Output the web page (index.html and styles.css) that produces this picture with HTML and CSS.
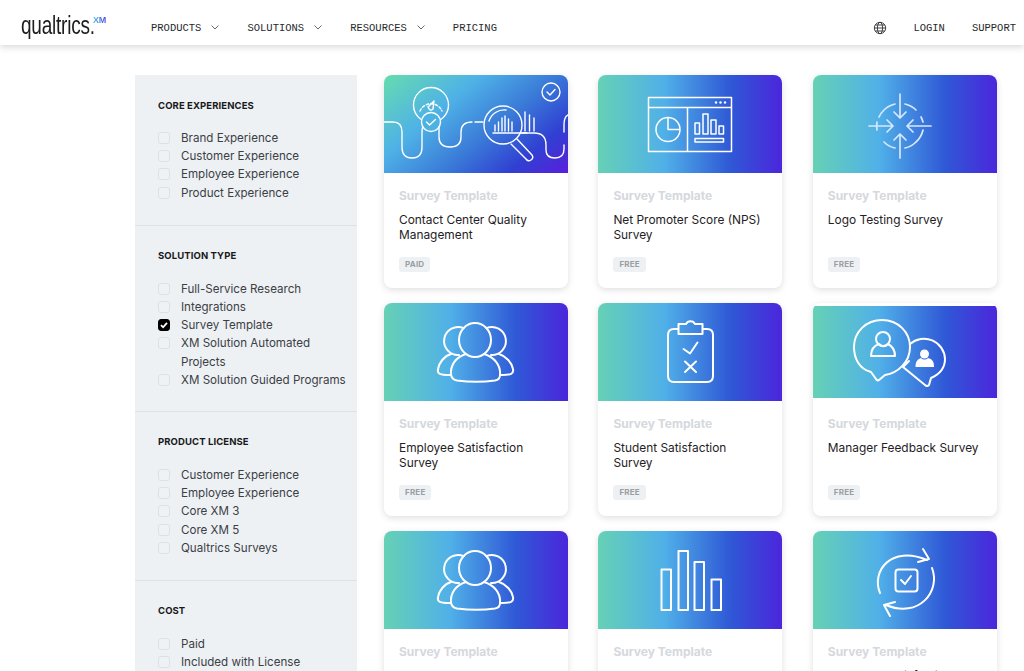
FILE: index.html
```html
<!DOCTYPE html>
<html lang="en">
<head>
<meta charset="utf-8">
<title>Qualtrics XM Marketplace</title>
<link rel="stylesheet" href="styles.css">
</head>
<body>
<svg class="defs" width="0" height="0" aria-hidden="true">
  <defs>
    <g id="people">
      <path d="M79.700 25.200A14 14 0 1 0 75 52"/>
      <path d="M102.300 25.200A14 14 0 1 1 107 52"/>
      <path d="M67 51C60 53 55 60 54 66 53 71 56 72 66 72"/>
      <path d="M115 51C122 53 128 60 129 66 130 71 127 72 117 72"/>
      <path d="M82 51C72 54 66 62 67 72 68 76 70 77 73 77.500 85 79 100 79 111 77.500 114 77 116 76 116 72 117 62 110 54 100 51"/>
      <ellipse cx="91" cy="37" rx="16" ry="17"/>
    </g>
  </defs>
</svg>

<header class="topbar">
  <a class="logo"><span class="logo-word">qualtrics.</span><sup class="logo-xm">XM</sup></a>
  <nav class="nav">
    <a class="nav-item">PRODUCTS<svg class="chev" viewBox="0 0 8 5"><path d="M.5.500 4 4 7.500.500"/></svg></a>
    <a class="nav-item">SOLUTIONS<svg class="chev" viewBox="0 0 8 5"><path d="M.5.500 4 4 7.500.500"/></svg></a>
    <a class="nav-item">RESOURCES<svg class="chev" viewBox="0 0 8 5"><path d="M.5.500 4 4 7.500.500"/></svg></a>
    <a class="nav-item">PRICING</a>
  </nav>
  <div class="util">
    <svg class="globe" viewBox="0 0 14 14"><circle cx="7" cy="7" r="5.700"/><ellipse cx="7" cy="7" rx="2.600" ry="5.700"/><path d="M1.300 7h11.400M2.200 4h9.600M2.200 10h9.600"/></svg>
    <a class="nav-item">LOGIN</a>
    <a class="nav-item">SUPPORT</a>
  </div>
</header>

<main class="page">
  <aside class="filters">
    <section class="group">
      <h3 class="group-title">CORE EXPERIENCES</h3>
      <ul class="opts">
        <li class="opt"><span class="box"></span>Brand Experience</li>
        <li class="opt"><span class="box"></span>Customer Experience</li>
        <li class="opt"><span class="box"></span>Employee Experience</li>
        <li class="opt"><span class="box"></span>Product Experience</li>
      </ul>
    </section>
    <section class="group">
      <h3 class="group-title">SOLUTION TYPE</h3>
      <ul class="opts">
        <li class="opt"><span class="box"></span>Full-Service Research</li>
        <li class="opt"><span class="box"></span>Integrations</li>
        <li class="opt"><span class="box box-on"><svg viewBox="0 0 12 12"><path d="M3 6.200 5.100 8.300 9 3.900"/></svg></span>Survey Template</li>
        <li class="opt opt-narrow"><span class="box"></span>XM Solution Automated Projects</li>
        <li class="opt"><span class="box"></span>XM Solution Guided Programs</li>
      </ul>
    </section>
    <section class="group">
      <h3 class="group-title">PRODUCT LICENSE</h3>
      <ul class="opts">
        <li class="opt"><span class="box"></span>Customer Experience</li>
        <li class="opt"><span class="box"></span>Employee Experience</li>
        <li class="opt"><span class="box"></span>Core XM 3</li>
        <li class="opt"><span class="box"></span>Core XM 5</li>
        <li class="opt"><span class="box"></span>Qualtrics Surveys</li>
      </ul>
    </section>
    <section class="group">
      <h3 class="group-title">COST</h3>
      <ul class="opts">
        <li class="opt"><span class="box"></span>Paid</li>
        <li class="opt"><span class="box"></span>Included with License</li>
        <li class="opt"><span class="box"></span>Free</li>
      </ul>
    </section>
  </aside>

  <div class="cards">
    <article class="card">
      <svg class="art art-diag" viewBox="0 0 184 98">
        <g class="ln">
          <path d="M0 47H9Q18 47 18 57V72Q18 83 28 83T38 72V58Q38 53 39 51"/>
          <path d="M55 52V62Q55 72 66 72T77 62V57Q77 47 88 47M91 47H99"/>
          <path d="M138 58H150Q162 58 162 70V75Q162 83 171 83T180 74V70M184 40Q180 42 180 50V57"/>
          <circle cx="47" cy="30" r="17.500"/>
          <path d="M36 36A12 12 0 0 1 58 36" stroke-dasharray="2.500 2"/>
          <path d="M44 32 50 26 49 34Q46 37 44 32Z"/>
          <circle class="chk-disc" cx="47" cy="47" r="9.500"/>
          <path d="M42.500 47 45.500 50 51.500 44.500"/>
          <path d="M111 56V50M114.500 56V47M118 56V43M121 56V41M124.500 56V44M128 56V47M141 56V37M145.500 56V40M150 56V43M109 58H143"/>
          <circle cx="119" cy="50" r="19"/>
          <path d="M133 64 148 80Q150 83 147 85T142 84L127 69"/>
          <path d="M105 46A16 16 0 0 1 122 35"/>
          <circle cx="167" cy="17" r="9"/>
          <path d="M163 17 166 20 171 14.500"/>
        </g>
      </svg>
      <div class="card-body">
        <p class="card-kind">Survey Template</p>
        <h4 class="card-title">Contact Center Quality Management</h4>
        <span class="tag">PAID</span>
      </div>
    </article>

    <article class="card">
      <svg class="art" viewBox="0 0 184 98">
        <g class="ln ln-mid">
          <path d="M50.500 22.500H133.500V76.500H50.500ZM50.500 32.500H133.500M89.500 32.500V76.500"/>
          <circle cx="70" cy="54.500" r="12"/>
          <path d="M70 42.500V54.500H82"/>
          <path d="M97 48H101.500V59H97ZM105 39H110V59H105ZM113 45H118V59H113ZM121 51H125.500V59H121ZM97 63.500H125.500V67H97Z"/>
        </g>
        <g class="dots"><circle cx="118" cy="27.500" r="1.200"/><circle cx="122.500" cy="27.500" r="1.200"/><circle cx="127" cy="27.500" r="1.200"/></g>
      </svg>
      <div class="card-body">
        <p class="card-kind">Survey Template</p>
        <h4 class="card-title">Net Promoter Score (NPS) Survey</h4>
        <span class="tag">FREE</span>
      </div>
    </article>

    <article class="card">
      <svg class="art" viewBox="0 0 184 98">
        <g class="ln ln-soft">
          <path d="M71 35A23 23 0 0 1 82 29M92 29A23 23 0 0 1 103 35M108 42A23 23 0 0 1 110 47M110 55A23 23 0 0 1 103 67M92 73A23 23 0 0 0 103 67M82 73A23 23 0 0 1 71 67M64 55A23 23 0 0 1 64 47M66 42A23 23 0 0 1 71 35"/>
          <path d="M87 19V43M81 37 87 43 93 37M87 83V59M81 65 87 59 93 65M56 51H80M74 45 80 51 74 57M118 51H94M100 45 94 51 100 57"/>
        </g>
      </svg>
      <div class="card-body">
        <p class="card-kind">Survey Template</p>
        <h4 class="card-title">Logo Testing Survey</h4>
        <span class="tag">FREE</span>
      </div>
    </article>

    <article class="card">
      <svg class="art" viewBox="0 0 184 98"><use class="ln ln-wide" href="#people"/></svg>
      <div class="card-body">
        <p class="card-kind">Survey Template</p>
        <h4 class="card-title">Employee Satisfaction Survey</h4>
        <span class="tag">FREE</span>
      </div>
    </article>

    <article class="card">
      <svg class="art" viewBox="0 0 184 98">
        <g class="ln ln-wide">
          <path d="M80 26H76Q70 26 70 32V73Q70 79 76 79H109Q115 79 115 73V32Q115 26 109 26H105"/>
          <path d="M80.500 21H88A5 5 0 0 1 97 21H104.500V31H80.500Z"/>
          <path d="M85.500 46 92 50.500 99.500 39.500M87 58.500 98 69M98 58.500 87 69"/>
        </g>
      </svg>
      <div class="card-body">
        <p class="card-kind">Survey Template</p>
        <h4 class="card-title">Student Satisfaction Survey</h4>
        <span class="tag">FREE</span>
      </div>
    </article>

    <article class="card">
      <svg class="art art-inset" viewBox="0 0 184 92">
        <g class="ln ln-wide">
          <path d="M58 66C46 63 41 52 41 41 41 26 53 14 69 14S97 26 97 41 85 67 72 69L66 74Q64 75 63 73Z"/>
          <path d="M97 38A21 21 0 0 1 132 53C132 62 127 68 118 72L116 79Q114 81 112 79L90 61 96 55"/>
          <circle cx="70" cy="33" r="7"/>
          <path d="M58 50C58 42 63 39 66 38 69 41 72 41 75 38 79 40 82 43 82 50Z"/>
        </g>
        <g class="dots"><circle cx="111.500" cy="48" r="4.500"/><path d="M102.500 61C102.500 55 105 53 108 52 110 54 113 54 115 52 119 53 121 55 121 61Z"/></g>
      </svg>
      <div class="card-body">
        <p class="card-kind">Survey Template</p>
        <h4 class="card-title">Manager Feedback Survey</h4>
        <span class="tag">FREE</span>
      </div>
    </article>

    <article class="card">
      <svg class="art" viewBox="0 0 184 98"><use class="ln ln-wide" href="#people"/></svg>
      <div class="card-body">
        <p class="card-kind">Survey Template</p>
        <h4 class="card-title">Employee Pulse Survey</h4>
        <span class="tag">FREE</span>
      </div>
    </article>

    <article class="card">
      <svg class="art" viewBox="0 0 184 98">
        <g class="ln ln-wide">
          <path d="M63.500 38.500H73V79H63.500ZM80.500 20H90V79H80.500ZM96.500 31H106V79H96.500ZM113.500 48.500H123V79H113.500Z"/>
        </g>
      </svg>
      <div class="card-body">
        <p class="card-kind">Survey Template</p>
        <h4 class="card-title">Market Research Survey</h4>
        <span class="tag">FREE</span>
      </div>
    </article>

    <article class="card">
      <svg class="art" viewBox="0 0 184 98">
        <g class="ln ln-wide">
          <path d="M67 62C58 40 78 14 114 29M110 18 116 28 105 31"/>
          <path d="M119 37C128 60 106 88 73 74M77 85 71 74 82 71"/>
          <rect x="82.500" y="38.500" width="22" height="22" rx="3"/>
          <path d="M88 49 92 53 98 45"/>
        </g>
      </svg>
      <div class="card-body">
        <p class="card-kind">Survey Template</p>
        <h4 class="card-title">Customer Satisfaction Survey</h4>
        <span class="tag">FREE</span>
      </div>
    </article>
  </div>
</main>
</body>
</html>
```

FILE: styles.css
```css
* { box-sizing: border-box; }
html, body { margin: 0; height: 671px; overflow: hidden; background: #fff; }
body { font-family: Inter, "Liberation Sans", sans-serif; color: #2b2f33; }
.defs { position: absolute; }

.topbar {
  display: flex;
  align-items: center;
  height: 45px;
  padding: 10px 8px 0 21px;
  background: #fff;
  box-shadow: 0 2px 7px rgba(0, 0, 0, .16);
}
.logo {
  display: flex;
  align-items: flex-start;
  width: 130px;
  margin-top: -4px;
  color: #1d1d1d;
}
.logo-word {
  width: 72px;
  font-family: "Liberation Sans", sans-serif;
  font-size: 25px;
  line-height: 25px;
  letter-spacing: -.3px;
  white-space: nowrap;
  transform: scaleX(.76);
  transform-origin: left center;
}
.logo-xm {
  margin-top: 2px;
  font-family: "Liberation Sans", sans-serif;
  font-size: 9px;
  line-height: 10px;
  font-weight: 700;
  letter-spacing: -.3px;
  background: linear-gradient(90deg, #49c3e8, #4a3fdc);
  -webkit-background-clip: text;
  background-clip: text;
  color: transparent;
}
.nav { display: flex; gap: 28px; }
.nav-item {
  display: flex;
  align-items: center;
  gap: 10px;
  font-family: "Liberation Mono", monospace;
  font-size: 10.5px;
  line-height: 14px;
  color: #26292c;
}
.chev { width: 8px; height: 5px; fill: none; stroke: #55595e; stroke-width: .9; }
.util { display: flex; align-items: center; margin-left: auto; gap: 27px; }
.globe { width: 14px; height: 14px; margin-right: -1px; fill: none; stroke: #2f3236; stroke-width: .9; }

.page {
  display: flex;
  align-items: flex-start;
  gap: 27px;
  padding: 30px 0 0 135px;
}
.filters { flex: none; width: 222px; background: #eef1f4; }
.group { padding: 24px 6px 23px 23px; border-bottom: 1px solid #dfe3e6; }
.group:first-child { padding-top: 25px; }
.group:first-child .group-title { margin-bottom: 17px; }
.group:nth-child(2) { padding-bottom: 22px; }
.group:last-child { border-bottom: 0; }
.group-title {
  margin: 0 0 18px;
  font-size: 9.5px;
  line-height: 12px;
  font-weight: 700;
  letter-spacing: .1px;
  color: #17191b;
}
.opts { margin: 0; padding: 0; list-style: none; }
.opt {
  position: relative;
  padding-left: 23px;
  font-size: 11.600px;
  line-height: 18.200px;
  color: #3b4045;
}
.opt-narrow { padding-right: 30px; }
.box {
  position: absolute;
  left: 0;
  top: 3px;
  width: 12px;
  height: 12px;
  border: 1px solid #dde1e5;
  border-radius: 3px;
  background: #eff2f5;
}
.box-on { background: #000; border-color: #000; }
.box-on svg { position: absolute; left: -1px; top: -1px; width: 12px; height: 12px; fill: none; stroke: #fff; stroke-width: 1.800; }

.cards {
  display: grid;
  grid-template-columns: repeat(3, 184px);
  column-gap: 30.400px;
  row-gap: 15px;
}
.card {
  display: flex;
  flex-direction: column;
  height: 213px;
  border-radius: 8px;
  background: #fff;
  box-shadow: 0 2px 7px rgba(0, 0, 0, .13);
  overflow: hidden;
}
.art {
  display: block;
  flex: none;
  width: 184px;
  height: 98px;
  background: linear-gradient(90deg, #66d1b5 0%, #50b0e8 36%, #2f58d6 72%, #4b26dc 100%);
}
.art-diag { background: linear-gradient(140deg, #66dcae 0%, #4fb2e6 32%, #3a7ad8 58%, #3040d2 80%, #5a1edc 100%); }
.art-inset { height: 92px; margin: 3px 0; }
.ln { fill: none; stroke: #fff; stroke-width: 1.400; stroke-linecap: round; stroke-linejoin: round; }
.ln-mid { stroke-width: 1.500; stroke-linecap: butt; }
.ln-wide { stroke-width: 2; }
.ln-soft { stroke: #d8e8fb; stroke-width: 1.700; }
.chk-disc { fill: #4cb2e2; }
.dots { fill: #fff; }

.card-body { display: flex; flex-direction: column; align-items: flex-start; padding: 15px 15px 0; }
.card-kind {
  margin: 0 0 8px;
  font-size: 12px;
  line-height: 16px;
  font-weight: 700;
  color: #d5d8dc;
}
.card-title {
  height: 30px;
  margin: 0 0 15px;
  font-size: 11.900px;
  line-height: 15px;
  font-weight: 400;
  color: #1f2225;
}
.tag {
  padding: 0 6px;
  border-radius: 3px;
  background: #eef1f4;
  font-size: 8px;
  line-height: 15px;
  font-weight: 700;
  letter-spacing: .2px;
  color: #9a9ea3;
}
```
